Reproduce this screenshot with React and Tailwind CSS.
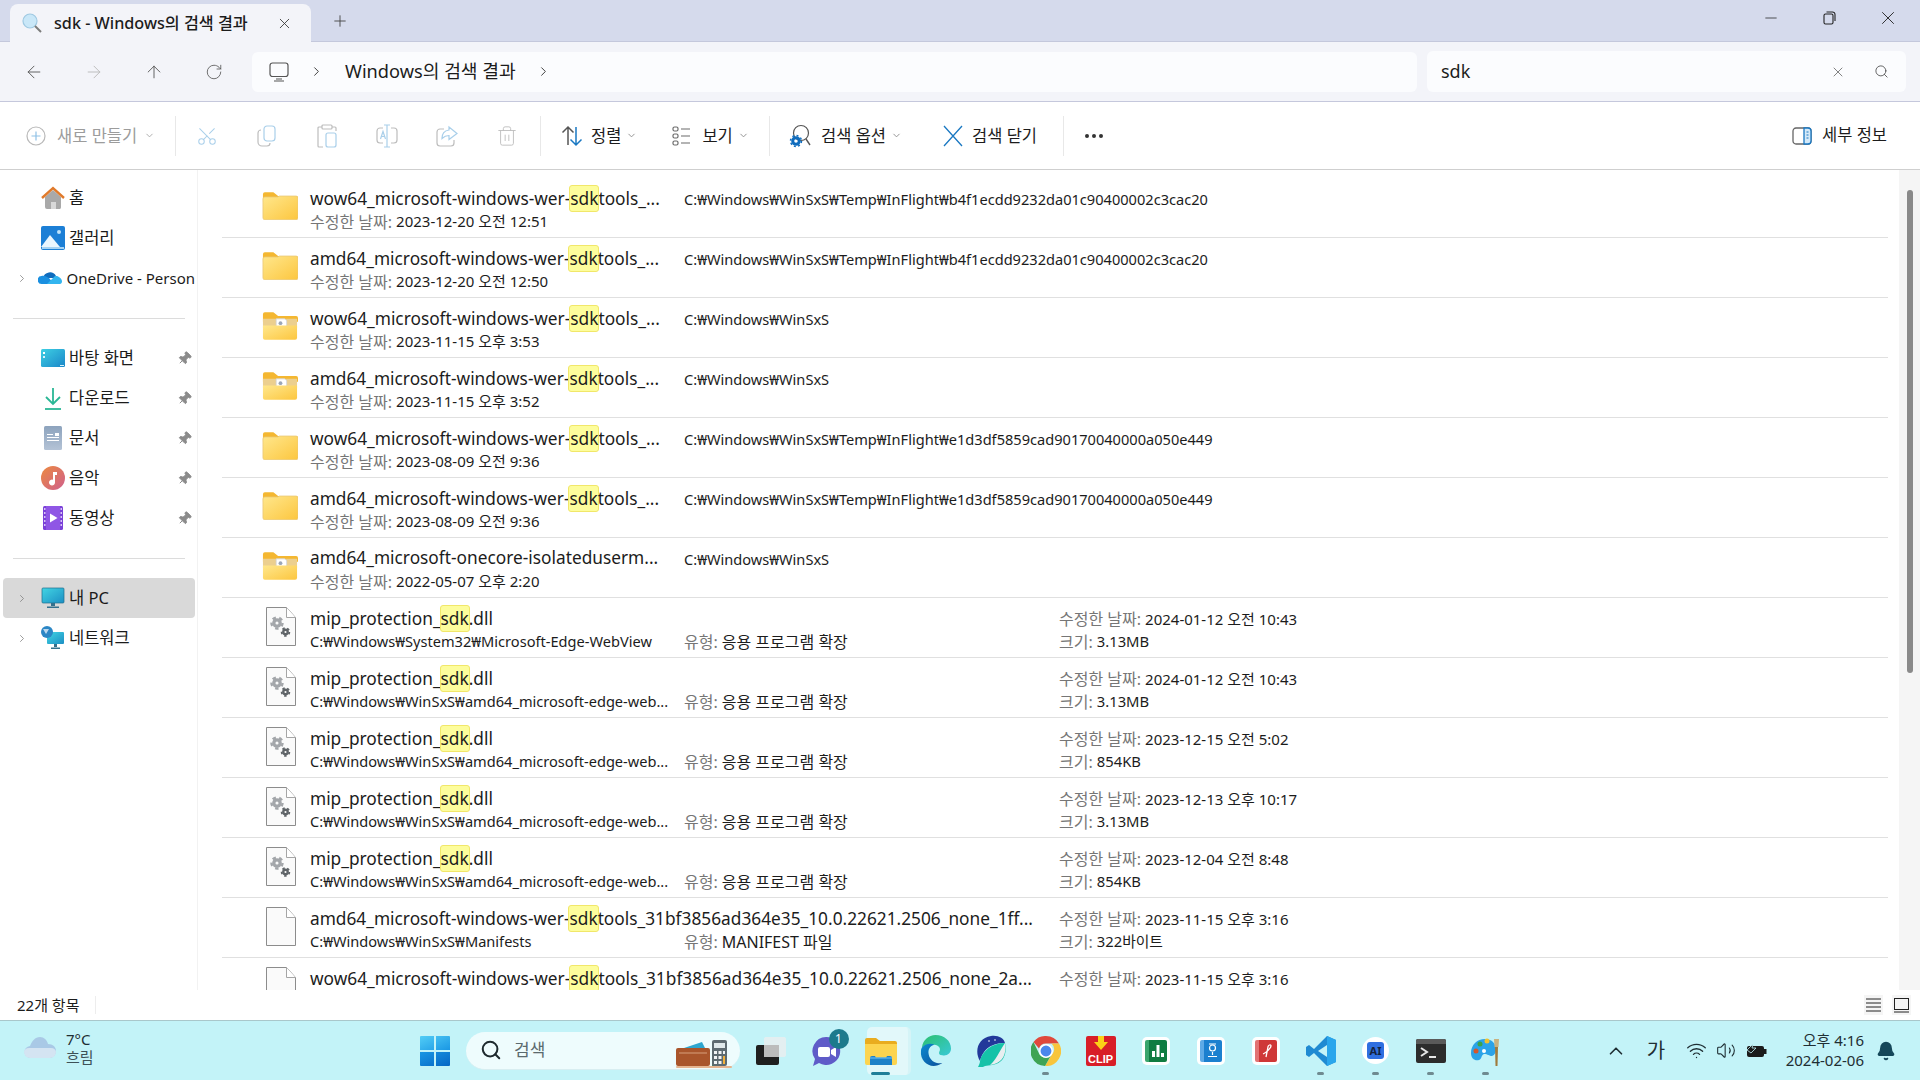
import React from "react";
import {
  ArrowLeft, ArrowRight, ArrowUp, RotateCw, ChevronRight, ChevronDown, ChevronUp, X, Plus, Search,
  Scissors, Trash2, Minus, MoreHorizontal, Pin, Bell, Wifi, Volume2,
} from "lucide-react";

const LONG1 = "C:₩Windows₩WinSxS₩Temp₩InFlight₩b4f1ecdd9232da01c90400002c3cac20";
const LONG2 = "C:₩Windows₩WinSxS₩Temp₩InFlight₩e1d3df5859cad90170040000a050e449";
const SXS = "C:₩Windows₩WinSxS";
const EDGE = "C:₩Windows₩WinSxS₩amd64_microsoft-edge-web...";

const folders = [
  { pre: "wow64_microsoft-windows-wer-", post: "tools_...", path: LONG1, date: "2023-12-20 오전 12:51" },
  { pre: "amd64_microsoft-windows-wer-", post: "tools_...", path: LONG1, date: "2023-12-20 오전 12:50" },
  { pre: "wow64_microsoft-windows-wer-", post: "tools_...", path: SXS, date: "2023-11-15 오후 3:53", doc: true },
  { pre: "amd64_microsoft-windows-wer-", post: "tools_...", path: SXS, date: "2023-11-15 오후 3:52", doc: true },
  { pre: "wow64_microsoft-windows-wer-", post: "tools_...", path: LONG2, date: "2023-08-09 오전 9:36" },
  { pre: "amd64_microsoft-windows-wer-", post: "tools_...", path: LONG2, date: "2023-08-09 오전 9:36" },
  { plain: "amd64_microsoft-onecore-isolateduserm...", path: SXS, date: "2022-05-07 오후 2:20", doc: true },
];

const files = [
  { pre: "mip_protection_", post: ".dll", path: "C:₩Windows₩System32₩Microsoft-Edge-WebView", type: "응용 프로그램 확장", date: "2024-01-12 오전 10:43", size: "3.13MB", dll: true },
  { pre: "mip_protection_", post: ".dll", path: EDGE, type: "응용 프로그램 확장", date: "2024-01-12 오전 10:43", size: "3.13MB", dll: true },
  { pre: "mip_protection_", post: ".dll", path: EDGE, type: "응용 프로그램 확장", date: "2023-12-15 오전 5:02", size: "854KB", dll: true },
  { pre: "mip_protection_", post: ".dll", path: EDGE, type: "응용 프로그램 확장", date: "2023-12-13 오후 10:17", size: "3.13MB", dll: true },
  { pre: "mip_protection_", post: ".dll", path: EDGE, type: "응용 프로그램 확장", date: "2023-12-04 오전 8:48", size: "854KB", dll: true },
  { pre: "amd64_microsoft-windows-wer-", post: "tools_31bf3856ad364e35_10.0.22621.2506_none_1ff...", path: "C:₩Windows₩WinSxS₩Manifests", type: "MANIFEST 파일", date: "2023-11-15 오후 3:16", size: "322바이트" },
  { pre: "wow64_microsoft-windows-wer-", post: "tools_31bf3856ad364e35_10.0.22621.2506_none_2a...", path: "", type: "", date: "2023-11-15 오후 3:16", size: "" },
];

// explorer icons
const FolderIcon = ({ doc }) => (
  <svg width="36" height="29" viewBox="0 0 38 30">
    <defs>
      <linearGradient id="fold" x1="0" y1="0" x2="1" y2="1">
        <stop offset="0" stopColor="#ffe78c" />
        <stop offset="1" stopColor="#fcc63f" />
      </linearGradient>
    </defs>
    <path d="M1 3a2 2 0 0 1 2-2h9l5 4h19a2 2 0 0 1 2 2v4H1z" fill="#f4b731" />
    {doc && <path d="M1 8h36v10H1z" fill="#eccf8e" />}
    {doc && <path d="M15 8h9l2 2v9H15z" fill="#fff" stroke="#cfd4dc" strokeWidth="0.8" />}
    {doc && <circle cx="19.5" cy="12.5" r="2" fill="#9ba7b8" />}
    {doc ? (
      <path d="M1 15h36v13a2 2 0 0 1-2 2H3a2 2 0 0 1-2-2z" fill="url(#fold)" />
    ) : (
      <path d="M1 8a2 2 0 0 1 2-2h14l1-1h18a2 2 0 0 1 2 2v21a2 2 0 0 1-2 2H3a2 2 0 0 1-2-2z" fill="url(#fold)" stroke="#e8c877" strokeWidth="0.8" />
    )}
  </svg>
);

const Gear = ({ cx, cy, r, fill }) => (
  <g>
    <circle cx={cx} cy={cy} r={r} fill={fill} />
    <circle cx={cx} cy={cy} r={r * 1.15} fill="none" stroke={fill} strokeWidth={r * 0.5} strokeDasharray={`${r * 0.72} ${r * 0.72}`} />
    <circle cx={cx} cy={cy} r={r * 0.32} fill="#fafafa" />
  </g>
);

const FileIcon = ({ dll }) => (
  <svg width="30" height="39" viewBox="0 0 30 39">
    <path d="M.5.5h20l9 10v28H.5z" fill="#fafafa" stroke="#8c8c8c" />
    <path d="M20.5.5v10h9" fill="#fff" stroke="#a5a5a5" />
    {dll && <Gear cx="11" cy="16" r="4.800" fill="#a3a6aa" />}
    {dll && <Gear cx="19.5" cy="25" r="3.400" fill="#5f6468" />}
  </svg>
);

const HomeIcon = () => (
  <svg width="24" height="24" viewBox="0 0 24 24">
    <path d="M4 11 12 4l8 7v10a2 2 0 0 1-1 2H6a2 2 0 0 1-2-2z" fill="#a9a9a9" />
    <path d="M10 23v-7h5v7z" fill="#d9d9d9" />
    <path d="M1 12 12 2l11 10" fill="none" stroke="#e07a2b" strokeWidth="2.4" />
  </svg>
);
const GalleryIcon = () => (
  <svg width="24" height="24" viewBox="0 0 24 24">
    <rect x="0" y="0" width="24" height="24" rx="2" fill="#1c7fd6" />
    <circle cx="18" cy="6" r="2" fill="#bfe3fb" />
    <path d="M0 21 9 9l10 12z" fill="#eaf6fe" />
    <rect x="1" y="21" width="22" height="2" fill="#a7d3f2" />
  </svg>
);
const OneDriveIcon = () => (
  <svg width="24" height="24" viewBox="0 0 24 24">
    <path d="M5 12a7 7 0 0 1 13-2 5 5 0 0 1 3 2z" fill="#0f6cbd" />
    <path d="M4 18a4 4 0 0 1-.5-8C6 9 9 11 11 12l5 6z" fill="#1a8fe0" />
    <path d="M9 18l8-8c3 0 7 2 7 5.500 0 2-1.500 2.500-3 2.500z" fill="#33b5ef" />
  </svg>
);
const DesktopIcon = () => (
  <svg width="24" height="24" viewBox="0 0 24 24">
    <defs>
      <linearGradient id="desk" x1="0" y1="0" x2="1" y2="1">
        <stop offset="0" stopColor="#3ed0e4" />
        <stop offset="1" stopColor="#1a86c8" />
      </linearGradient>
    </defs>
    <rect y="3" width="24" height="18" rx="1.500" fill="url(#desk)" />
    <rect x="2" y="6" width="2" height="2" fill="#fff" />
    <rect x="2" y="10" width="2" height="2" fill="#d8f4fb" />
    <rect x="19" y="19" width="4" height="1" fill="#d8f4fb" />
  </svg>
);
const DownloadIcon = () => (
  <svg width="24" height="24" viewBox="0 0 24 24" fill="none" stroke="#2ab795" strokeWidth="1.800">
    <path d="M12 2v15M5 11l7 7 7-7" />
    <path d="M4 23h16" />
  </svg>
);
const DocsIcon = () => (
  <svg width="24" height="24" viewBox="0 0 24 24">
    <defs>
      <linearGradient id="docs" x1="0" y1="0" x2="0" y2="1">
        <stop offset="0" stopColor="#8da3bd" />
        <stop offset="1" stopColor="#b4c3d6" />
      </linearGradient>
    </defs>
    <rect x="3" y="0" width="18" height="24" rx="1.500" fill="url(#docs)" />
    <path d="M6 8h6v1H6zM6 11h12v1H6zM6 14h12v1H6zM14 7h4v3h-4z" fill="#fff" />
  </svg>
);
const MusicIcon = () => (
  <svg width="24" height="24" viewBox="0 0 24 24">
    <defs>
      <linearGradient id="mus" x1="0" y1="0" x2="1" y2="1">
        <stop offset="0" stopColor="#ec8a3f" />
        <stop offset="1" stopColor="#cf5f8d" />
      </linearGradient>
    </defs>
    <circle cx="12" cy="12" r="12" fill="url(#mus)" />
    <path d="M12 6h4v3h-2v7.500a3 3 0 1 1-2-2.800z" fill="#fff" />
  </svg>
);
const VideoIcon = () => (
  <svg width="24" height="24" viewBox="0 0 24 24">
    <rect x="2" y="0" width="20" height="24" rx="1.500" fill="#7a40d8" />
    <path d="M5 0h14v24H5z" fill="#8f56e5" />
    <path d="M9 7.500 16.500 12 9 16.500z" fill="#fff" />
    <path d="M3 2h1.500v2H3zM3 6h1.500v2H3zM3 10h1.500v2H3zM3 14h1.500v2H3zM3 18h1.500v2H3zM19.500 2H21v2h-1.500zM19.500 6H21v2h-1.500zM19.500 10H21v2h-1.500zM19.500 14H21v2h-1.500zM19.500 18H21v2h-1.500z" fill="#d8c3f8" />
  </svg>
);
const PcIcon = () => (
  <svg width="24" height="24" viewBox="0 0 24 24">
    <defs>
      <linearGradient id="pc" x1="0" y1="0" x2="1" y2="1">
        <stop offset="0" stopColor="#42d5e3" />
        <stop offset="1" stopColor="#1c8fc4" />
      </linearGradient>
    </defs>
    <rect x="1" y="2" width="22" height="15" rx="1" fill="url(#pc)" stroke="#1e6f8c" strokeWidth="0.700" />
    <path d="M10 17h4v3h-4zM6 20.500h12V22H6z" fill="#35708c" />
  </svg>
);
const NetworkIcon = () => (
  <svg width="24" height="24" viewBox="0 0 24 24">
    <defs>
      <linearGradient id="net" x1="0" y1="0" x2="1" y2="1">
        <stop offset="0" stopColor="#42d5e3" />
        <stop offset="1" stopColor="#1c8fc4" />
      </linearGradient>
    </defs>
    <rect x="6" y="6" width="17" height="12" rx="1" fill="url(#net)" />
    <path d="M13 18h3v3h-3zM10 21.500h9V23h-9z" fill="#35708c" />
    <circle cx="6" cy="6" r="6" fill="#2b86c5" />
    <path d="M2 3h6L5 8z" fill="#bcd8ef" />
  </svg>
);

const NavPin = () => <Pin size={15} className="rotate-45 text-[#8b8b8b] fill-[#8b8b8b]" strokeWidth={1.500} />;

const NavItem = ({ icon, label, arrow, pinned, active, labelClass = "text-[16.500px]" }) => (
  <div className={`flex items-center h-[40px] mx-[3px] pl-[13px] rounded-[4px] w-[192px] ${active ? "bg-[#d9d9d9]" : ""}`}>
    <div className="w-[12px] flex items-center justify-center text-[#7c7c7c]">
      {arrow && <ChevronRight size={15} strokeWidth={1.500} />}
    </div>
    <div className="w-[38px] flex justify-end pr-[1px]">{icon}</div>
    <div className={`ml-[3px] text-[#1b1b1b] whitespace-nowrap flex-1 ${labelClass}`}>{label}</div>
    {pinned && <div className="w-[27px] flex justify-end pr-[3px]"><NavPin /></div>}
  </div>
);

const Sep = () => (
  <div className="h-[40px] flex items-center pl-[13px] pr-[12px]">
    <div className="h-[1px] w-full bg-[#dcdcdc]" />
  </div>
);

const Sidebar = () => (
  <div className="w-[198px] shrink-0 border-r border-[#f2f2f2] pt-[8px] overflow-hidden">
    <NavItem icon={<HomeIcon />} label="홈" />
    <NavItem icon={<GalleryIcon />} label="갤러리" />
    <NavItem icon={<OneDriveIcon />} label="OneDrive - Person" arrow labelClass="text-[15px] pl-[1px]" />
    <Sep />
    <NavItem icon={<DesktopIcon />} label="바탕 화면" pinned />
    <NavItem icon={<DownloadIcon />} label="다운로드" pinned />
    <NavItem icon={<DocsIcon />} label="문서" pinned />
    <NavItem icon={<MusicIcon />} label="음악" pinned />
    <NavItem icon={<VideoIcon />} label="동영상" pinned />
    <Sep />
    <NavItem icon={<PcIcon />} label="내 PC" arrow active />
    <NavItem icon={<NetworkIcon />} label="네트워크" arrow />
  </div>
);

const Mark = ({ children }) => (
  <span className="inline-block h-[27px] leading-[25px] bg-[#fdfd9c] border border-[#f1e76a] rounded-[3px] -mx-[1px]">{children}</span>
);

const Name = ({ row }) => (
  <div className="h-[24px] mb-[2px] flex items-center text-[17.300px] text-[#1c1c1c] whitespace-nowrap">
    {row.plain ? row.plain : (
      <span>{row.pre}<Mark>sdk</Mark>{row.post}</span>
    )}
  </div>
);

const Meta = ({ label, value, valueClass = "text-[15px]" }) => (
  <div className="h-[19px] flex items-center whitespace-nowrap">
    <span className="text-[16px] text-[#767676]">{label}:</span>
    <span className={`ml-[4px] text-[#1c1c1c] ${valueClass}`}>{value}</span>
  </div>
);

const FolderRow = ({ row }) => (
  <div className="flex h-[60px] border-b border-[#e0e0e0] shrink-0">
    <div className="w-[88px] flex items-center pl-[40px] pb-[4px]"><FolderIcon doc={row.doc} /></div>
    <div className="w-[374px] pt-[8px]">
      <Name row={row} />
      <Meta label="수정한 날짜" value={row.date} />
    </div>
    <div className="pt-[10px]">
      <div className="h-[24px] flex items-center text-[14.600px] text-[#1c1c1c] whitespace-nowrap">{row.path}</div>
    </div>
  </div>
);

const FileRow = ({ row }) => (
  <div className="flex h-[60px] border-b border-[#e0e0e0] shrink-0">
    <div className="w-[88px] flex items-center pl-[44px] pb-[2px]"><FileIcon dll={row.dll} /></div>
    <div className="w-[374px] pt-[8px]">
      <Name row={row} />
      <div className="h-[19px] flex items-center text-[14.600px] text-[#1c1c1c] whitespace-nowrap">{row.path}</div>
    </div>
    <div className="w-[375px] pt-[10px]">
      <div className="h-[24px]" />
      {row.type && <Meta label="유형" value={row.type} valueClass="text-[16px]" />}
    </div>
    <div className="pt-[9px]">
      <div className="h-[24px] mb-[1px] flex items-center"><Meta label="수정한 날짜" value={row.date} /></div>
      {row.size && <Meta label="크기" value={row.size} valueClass="text-[14.800px]" />}
    </div>
  </div>
);

const ToolDivider = () => <div className="w-[1px] h-[40px] bg-[#e8e8e8]" />;

const Slot = ({ w, className = "", children }) => (
  <div className={`flex items-center justify-center shrink-0 ${className}`} style={{ width: w }}>{children}</div>
);

const Toolbar = () => (
  <div className="h-[68px] shrink-0 bg-white border-b border-[#cfcfcf] flex items-center text-[16.500px] text-[#1c1c1c]">
    <div className="flex items-center pl-[26px] w-[175px] text-[#9c9c9c]">
      <svg width="20" height="20" viewBox="0 0 20 20" fill="none" stroke="#b9b9b9" strokeWidth="1.200">
        <circle cx="10" cy="10" r="9" />
        <path d="M10 5.500v9M5.500 10h9" stroke="#8fc1e6" />
      </svg>
      <span className="ml-[11px] mt-[2px]">새로 만들기</span>
      <ChevronDown size={11} className="ml-[7px] text-[#a8a8a8]" />
    </div>
    <ToolDivider />
    <div className="flex items-center pl-[1px] text-[#b4b4b4]">
      <Slot w={60}><Scissors size={22} strokeWidth={1.100} className="-rotate-90 text-[#a9cfea]" /></Slot>
      <Slot w={60}>
        <svg width="20" height="22" viewBox="0 0 20 22" fill="none" strokeWidth="1.200">
          <rect x="7" y="1" width="11" height="15" rx="3" stroke="#a9cfea" />
          <path d="M4 5a3 3 0 0 0-3 3v9a4 4 0 0 0 4 4h5a3 3 0 0 0 3-3" stroke="#bdbdbd" />
        </svg>
      </Slot>
      <Slot w={60}>
        <svg width="20" height="24" viewBox="0 0 20 24" fill="none" strokeWidth="1.200">
          <path d="M5 3H2a1 1 0 0 0-1 1v18a1 1 0 0 0 1 1h4M15 3h3a1 1 0 0 1 1 1v3" stroke="#bdbdbd" />
          <rect x="5" y="1" width="10" height="4" rx="1" stroke="#bdbdbd" />
          <rect x="9" y="9" width="10" height="14" rx="2" stroke="#a9cfea" />
        </svg>
      </Slot>
      <Slot w={60}>
        <svg width="22" height="24" viewBox="0 0 22 24" fill="none" strokeWidth="1.200">
          <path d="M7 4H4a3 3 0 0 0-3 3v9a3 3 0 0 0 3 3h3M15 4h3a3 3 0 0 1 3 3v9a3 3 0 0 1-3 3h-3" stroke="#bdbdbd" />
          <path d="M8 1h6M8 23h6M11 1v22" stroke="#a9cfea" />
          <path d="M4.500 15 7 7.500 9.500 15M5.500 12.500h3" stroke="#a9cfea" />
        </svg>
      </Slot>
      <Slot w={60}>
        <svg width="22" height="22" viewBox="0 0 22 22" fill="none" strokeWidth="1.200">
          <path d="M8 4H4a3 3 0 0 0-3 3v11a3 3 0 0 0 3 3h11a3 3 0 0 0 3-3v-3" stroke="#bdbdbd" />
          <path d="M13 2l8 6.500-8 6v-4c-3 0-5 1-7 3 0-5 3-8 7-8.500z" stroke="#a9cfea" />
        </svg>
      </Slot>
      <Slot w={60}><Trash2 size={22} strokeWidth={1} className="text-[#bdbdbd]" /></Slot>
    </div>
    <div className="ml-[3px]"><ToolDivider /></div>
    <div className="flex items-center ml-[20px] w-[208px]">
      <svg width="22" height="22" viewBox="0 0 22 22" fill="none" strokeWidth="1.500">
        <path d="M7 20V2M1.500 7.500 7 2l5.500 5.500" stroke="#555" />
        <path d="M15 2v18M9.500 14.500 15 20l5.500-5.500" stroke="#1a78c2" />
      </svg>
      <span className="ml-[8px] mt-[2px]">정렬</span>
      <ChevronDown size={11} className="ml-[5px] text-[#8c8c8c]" />
      <svg className="ml-[35px]" width="20" height="20" viewBox="0 0 20 20" fill="none" stroke="#6a6a6a" strokeWidth="1.200">
        <rect x="1" y="1" width="5" height="4" rx="1.500" />
        <rect x="1" y="8" width="5" height="4" rx="1.500" />
        <rect x="1" y="15" width="5" height="4" rx="1.500" />
        <path d="M9 3h9M9 10h9M9 17h9" />
      </svg>
      <span className="ml-[10px] mt-[2px]">보기</span>
      <ChevronDown size={11} className="ml-[5px] text-[#8c8c8c]" />
    </div>
    <ToolDivider />
    <div className="flex items-center ml-[19px] w-[274px]">
      <svg width="22" height="24" viewBox="0 0 22 24" fill="none">
        <circle cx="12" cy="9" r="7.500" stroke="#555" strokeWidth="1.200" />
        <path d="M17 15l4 6" stroke="#555" strokeWidth="1.400" />
        <circle cx="7" cy="17" r="3.300" stroke="#0f6cbd" strokeWidth="3" />
        <circle cx="7" cy="17" r="5.500" stroke="#0f6cbd" strokeWidth="1.500" strokeDasharray="2 2.300" />
      </svg>
      <span className="ml-[10px] mt-[2px]">검색 옵션</span>
      <ChevronDown size={11} className="ml-[5px] text-[#8c8c8c]" />
      <svg className="ml-[40px]" width="22" height="22" viewBox="0 0 22 22" fill="none" stroke="#1a78c2" strokeWidth="1.300">
        <path d="M2 1l18 20M20 1 2 21" />
      </svg>
      <span className="ml-[8px] mt-[2px]">검색 닫기</span>
    </div>
    <ToolDivider />
    <MoreHorizontal size={24} className="ml-[18px] text-[#333]" />
    <div className="ml-auto flex items-center pr-[33px]">
      <svg width="20" height="18" viewBox="0 0 20 18" fill="none">
        <rect x="1" y="1" width="18" height="16" rx="3" stroke="#666" strokeWidth="1.300" />
        <path d="M12 1h4a3 3 0 0 1 3 3v10a3 3 0 0 1-3 3h-4z" fill="#d4e9f8" stroke="#1a78c2" strokeWidth="1.300" />
        <path d="M14.500 5h2M14.500 8h2M14.500 11h2" stroke="#1a78c2" />
      </svg>
      <span className="ml-[10px]">세부 정보</span>
    </div>
  </div>
);

const Indicator = ({ active }) => (
  <div className={active ? "w-[19px] h-[3px] rounded-full bg-[#1f7f99]" : "w-[7px] h-[3px] rounded-full bg-[#6f8a90]"} />
);

const TaskIcon = ({ running, active, children }) => (
  <div className="w-[55px] h-[60px] shrink-0 relative flex items-center justify-center">
    {active && <div className="absolute top-[6px] left-[14px] w-[44px] h-[48px] rounded-[5px] bg-[#e2f8fa] border-r-[3px] border-[#d5f4f7]" />}
    <div className="relative">{children}</div>
    {running && <div className="absolute bottom-[6px] left-0 right-0 flex justify-center"><Indicator active={active} /></div>}
  </div>
);

const AppTile = ({ color, children }) => (
  <div className="w-[28px] h-[28px] rounded-[5px] bg-white flex items-center justify-center">
    <div className={`w-[22px] h-[22px] rounded-[2px] flex items-center justify-center ${color}`}>{children}</div>
  </div>
);

const TaskIcons = () => (
  <div className="flex items-center ml-[3px]">
    <TaskIcon>
      <svg width="30" height="30" viewBox="0 0 30 30">
        <rect x="0" y="9" width="23" height="20" rx="2" fill="#1f1f1f" />
        <rect x="8" y="1" width="22" height="20" rx="2" fill="#e7eef0" opacity="0.9" />
        <rect x="8" y="9" width="15" height="12" fill="#bcbcbc" />
      </svg>
    </TaskIcon>
    <TaskIcon>
      <div className="relative">
        <svg width="30" height="34" viewBox="0 0 30 34">
          <path d="M15 3a14 14 0 1 1-7 26l-6 3 2-7A14 14 0 0 1 15 3z" fill="#5f5bc8" />
          <rect x="7" y="13" width="12" height="10" rx="2" fill="#fff" />
          <path d="M20 16l5-3v10l-5-3z" fill="#fff" />
        </svg>
        <div className="absolute -top-[5px] -right-[8px] w-[20px] h-[20px] rounded-full bg-[#1d7a8c] text-white text-[12px] flex items-center justify-center">1</div>
      </div>
    </TaskIcon>
    <TaskIcon active running>
      <svg width="32" height="28" viewBox="0 0 32 28">
        <path d="M0 3a2 2 0 0 1 2-2h9l4 3h15a2 2 0 0 1 2 2v4H0z" fill="#e9ac1f" />
        <path d="M0 7h32v19a2 2 0 0 1-2 2H2a2 2 0 0 1-2-2z" fill="#fcd44f" />
        <path d="M5 28V21a2 2 0 0 1 2-2h3l1 2h10l1-2h3a2 2 0 0 1 2 2v7z" fill="#1e81c8" />
        <path d="M5 21h22" stroke="#53aee8" strokeWidth="1.500" />
      </svg>
    </TaskIcon>
    <TaskIcon>
      <svg width="31" height="31" viewBox="0 0 32 32">
        <defs>
          <linearGradient id="edgeA" x1="0" y1="0" x2="1" y2="1">
            <stop offset="0" stopColor="#2dc06e" />
            <stop offset="1" stopColor="#37c9d6" />
          </linearGradient>
          <linearGradient id="edgeB" x1="0" y1="0" x2="1" y2="1">
            <stop offset="0" stopColor="#0c8bd1" />
            <stop offset="1" stopColor="#0b4f9a" />
          </linearGradient>
        </defs>
        <path d="M2 13C3 5 9 0 16 0c9 0 16 6 16 14 0 5-4 8-9 7-3 0-4-2-3-4 2-3-1-7-5-7-5 0-10 0-13 3z" fill="url(#edgeA)" />
        <path d="M2 13c3-4 9-5 13-3-5 1-7 5-6 10 1 6 7 10 14 9-3 2-6 3-9 3C7 32 0 25 1 17c0-2 .5-3 1-4z" fill="url(#edgeB)" />
      </svg>
    </TaskIcon>
    <TaskIcon>
      <svg width="30" height="32" viewBox="0 0 30 32">
        <path d="M4 26C-2 16 2 3 15 1c7-1 13 2 14 7-8 0-21 2-25 18z" fill="#22399a" />
        <path d="M4 26c2-10 12-18 25-18 2 8 0 18-9 21-5 2-11 1-13 3-2 0-3 0-5 0 1-2 2-4 2-6z" fill="#15c2a8" />
        <path d="M14 30c6-5 9-13 15-22 2 10-2 21-15 22z" fill="#e8eef0" />
        <circle cx="13" cy="6" r="0.800" fill="#fff" />
        <circle cx="19" cy="5" r="0.800" fill="#fff" />
      </svg>
    </TaskIcon>
    <TaskIcon running>
      <svg width="30" height="30" viewBox="0 0 30 30">
        <path d="M15 0a15 15 0 0 1 13 7.500H15a7.500 7.500 0 0 0-7 5L2.500 6A15 15 0 0 1 15 0z" fill="#e0493c" />
        <path d="M28 7.500A15 15 0 0 1 14 30l6.500-11a7.500 7.500 0 0 0 0-11.500z" fill="#f8c53c" />
        <path d="M2.500 6 8.500 18.500a7.500 7.500 0 0 0 12 0L14 30A15 15 0 0 1 2.500 6z" fill="#3ea455" />
        <circle cx="15" cy="15" r="6.200" fill="#4a87ec" />
        <circle cx="15" cy="15" r="6.200" fill="none" stroke="#fff" strokeWidth="1.500" />
      </svg>
    </TaskIcon>
    <TaskIcon>
      <div className="w-[30px] h-[30px] rounded-[2px] bg-[#d81e28] flex flex-col items-center justify-end relative font-['Liberation_Sans',sans-serif]">
        <svg className="absolute top-0 left-[8px]" width="14" height="14" viewBox="0 0 14 14"><path d="M4 0h6v6h4l-7 8-7-8h4z" fill="#fcd116" /></svg>
        <span className="text-white text-[11px] font-bold leading-[14px]">CLIP</span>
      </div>
    </TaskIcon>
    <TaskIcon>
      <AppTile color="bg-[#107c41] border-l-[4px] border-[#3aa56d]">
        <svg width="13" height="13" viewBox="0 0 13 13" fill="#fff"><path d="M1 7h3v6H1zM5.500 1h3v12h-3zM10 9h3v4h-3z" /></svg>
      </AppTile>
    </TaskIcon>
    <TaskIcon>
      <AppTile color="bg-[#1b80cf] border-l-[4px] border-[#5eaae6]">
        <svg width="15" height="15" viewBox="0 0 15 15" fill="none" stroke="#fff" strokeWidth="1.200"><circle cx="7.500" cy="5" r="3" /><path d="M4 1h7M7.500 9v3M3 13.500h9" /></svg>
      </AppTile>
    </TaskIcon>
    <TaskIcon>
      <AppTile color="bg-[#cf3737] border-l-[4px] border-[#e27373]">
        <svg width="15" height="15" viewBox="0 0 15 15" fill="none" stroke="#fff" strokeWidth="1.300"><path d="M3 11c3-1 8-6 8-8s-3-1-3 1l-2 10" /></svg>
      </AppTile>
    </TaskIcon>
    <TaskIcon running>
      <svg width="30" height="30" viewBox="0 0 30 30">
        <path d="M21 0 8 13 3 9 0 11v8l3 2 5-4 13 13 9-4V4z" fill="#1f8ad2" />
        <path d="M21 0 30 4v22l-9 4z" fill="#2aa6ec" />
        <path d="M21 9 12 15l9 6z" fill="#c4f3f8" />
      </svg>
    </TaskIcon>
    <TaskIcon running>
      <div className="w-[27px] h-[27px] rounded-full bg-white flex items-center justify-center">
        <div className="w-[17px] h-[17px] rounded-[3px] bg-[#2f6fe0] flex items-center justify-center text-[#14233f] text-[11px] font-bold leading-none">AI</div>
      </div>
    </TaskIcon>
    <TaskIcon running>
      <svg width="30" height="24" viewBox="0 0 30 24">
        <rect width="30" height="24" rx="2" fill="#2c2c2c" />
        <path d="M0 2a2 2 0 0 1 2-2h26a2 2 0 0 1 2 2v3H0z" fill="#5a5a5a" />
        <path d="M5 9l6 4-6 4" fill="none" stroke="#e6e6e6" strokeWidth="2" />
        <path d="M13 18h7" stroke="#e6e6e6" strokeWidth="2" />
      </svg>
    </TaskIcon>
    <TaskIcon running>
      <svg width="30" height="30" viewBox="0 0 30 30">
        <path d="M14 3C6 3 0 9 0 17c0 6 4 8 8 7 3-1 2-5 5-6 4 0 5 2 8 2 3-1 4-4 4-7 0-6-5-10-11-10z" fill="#2ba3e8" />
        <circle cx="5" cy="15" r="2.500" fill="#d5562b" />
        <circle cx="9" cy="8" r="2.500" fill="#3ca34a" />
        <circle cx="16" cy="5" r="2.500" fill="#f2c12e" />
        <circle cx="13" cy="15" r="2" fill="#fff" />
        <path d="M24 10h3l-.5 20h-2z" fill="#a07a3b" />
        <path d="M23 3h5l-.5 8h-4z" fill="#c9b27f" />
      </svg>
    </TaskIcon>
  </div>
);

const Taskbar = () => (
  <div className="h-[60px] shrink-0 bg-[#c3f3f8] border-t border-[#a9c7cb] flex items-center">
    <div className="w-[420px] shrink-0 flex items-center pl-[24px]">
      <svg className="mb-[6px]" width="32" height="22" viewBox="0 0 32 22">
        <path d="M7 21a6 6 0 0 1-1-12C8 4 11 0 16 0c4 0 7 3 8 7 5 0 8 3 8 7s-3 7-7 7z" fill="#a9c9e6" />
        <path d="M0 15c0-2 2-4 5-4h22c3 0 5 2 5 4a6 6 0 0 1-6 6H6a6 6 0 0 1-6-6z" fill="#d4e4f2" />
      </svg>
      <div className="ml-[10px] mb-[5px] text-[15px] leading-[18px] text-[#1f2e33]">
        <div>7°C</div>
        <div className="text-[#3d5157]">흐림</div>
      </div>
    </div>
    <svg width="30" height="30" viewBox="0 0 30 30" className="shrink-0">
      <defs>
        <linearGradient id="winA" x1="0" y1="0" x2="1" y2="1"><stop offset="0" stopColor="#52cdf6" /><stop offset="1" stopColor="#1a97e4" /></linearGradient>
        <linearGradient id="winB" x1="0" y1="0" x2="1" y2="1"><stop offset="0" stopColor="#1a97e4" /><stop offset="1" stopColor="#0666c4" /></linearGradient>
      </defs>
      <path d="M0 1a1 1 0 0 1 1-1h13v14H0zM16 0h13a1 1 0 0 1 1 1v13H16z" fill="url(#winA)" />
      <path d="M0 16h14v14H1a1 1 0 0 1-1-1zM16 16h14v13a1 1 0 0 1-1 1H16z" fill="url(#winB)" />
    </svg>
    <div className="ml-[16px] w-[274px] h-[38px] shrink-0 rounded-full bg-[#eefcfd] border-b border-[#d8eef1] flex items-center pl-[14px] relative">
      <Search size={22} strokeWidth={2.200} className="text-[#1e2a2e]" />
      <span className="ml-[12px] text-[17px] text-[#5b6a6e]">검색</span>
      <svg className="absolute right-[8px] top-[8px]" width="56" height="28" viewBox="0 0 56 28">
        <rect x="0" y="8" width="34" height="18" rx="2" fill="#a9552b" />
        <path d="M8 8 26 2l3 6z" fill="#2da6cf" />
        <path d="M3 13h28" stroke="#d7a07c" />
        <rect x="36" y="8" width="4" height="18" fill="#3f8a63" />
        <rect x="36" y="0" width="15" height="26" rx="2" fill="#5d6a70" />
        <rect x="38" y="3" width="11" height="5" fill="#dfe8ea" />
        <path d="M38 11h3v3h-3zM42.500 11h3v3h-3zM47 11h2v3h-2zM38 16h3v3h-3zM42.500 16h3v3h-3zM38 21h3v3h-3zM42.500 21h3v3h-3z" fill="#f1f4f5" />
        <path d="M47 16h2v8h-2z" fill="#f2b13c" />
        <rect x="0" y="26" width="56" height="2" rx="1" fill="#e5b48f" />
      </svg>
    </div>
    <TaskIcons />
    <div className="flex items-center ml-[83px] text-[#1f2e33]">
      <Slot w={40}><ChevronUp size={22} strokeWidth={1.800} /></Slot>
      <Slot w={40}><span className="text-[20px]">가</span></Slot>
      <Slot w={40}><Wifi size={21} strokeWidth={1.500} /></Slot>
      <Slot w={20}><Volume2 size={21} strokeWidth={1.300} /></Slot>
      <Slot w={40}>
        <svg width="21" height="14" viewBox="0 0 21 14">
          <rect x="1" y="2" width="17" height="11" rx="2" fill="#1b1b1b" />
          <rect x="18" y="5" width="2.500" height="5" fill="#1b1b1b" />
          <path d="M1 6 7 0l-1 4h4L5 9z" fill="#1b1b1b" stroke="#c3f3f8" strokeWidth="0.800" />
        </svg>
      </Slot>
    </div>
    <div className="w-[88px] mb-[2px] text-right text-[15px] leading-[20px] text-[#1f2e33]">
      <div>오후 4:16</div>
      <div>2024-02-06</div>
    </div>
    <Bell size={20} className="ml-[12px] text-[#15475a] fill-[#15475a]" />
  </div>
);

export default function App() {
  return (
    <div className="w-[1920px] h-[1080px] flex flex-col overflow-hidden bg-white font-['Noto_Sans','Noto_Sans_CJK_KR',sans-serif]">
      {/* TITLE BAR */}
      <div className="h-[42px] shrink-0 bg-[#d5daec] border-b border-[#c4c8dc] flex items-end">
        <div className="ml-[10px] w-[301px] h-[38px] bg-[#f3f4f9] rounded-t-[8px] flex items-center pl-[11px] translate-y-[1px]">
          <svg width="22" height="22" viewBox="0 0 22 22" fill="none">
            <circle cx="9" cy="9" r="7" fill="#c9e7f8" stroke="#9fc9e2" strokeWidth="1.200" />
            <path d="M14 14l6 6" stroke="#7c7c7c" strokeWidth="2" />
          </svg>
          <span className="ml-[11px] text-[16.200px] font-medium text-[#1c1c1c] whitespace-nowrap">sdk - Windows의 검색 결과</span>
          <X size={17} strokeWidth={1.200} className="ml-auto mr-[18px] text-[#333]" />
        </div>
        <Plus size={18} strokeWidth={1.200} className="ml-[20px] mb-[11px] text-[#444]" />
        <div className="ml-auto flex items-center self-start h-[36px] pr-[2px] text-[#222]">
          <Slot w={58}><Minus size={18} strokeWidth={1} /></Slot>
          <Slot w={58}>
            <svg width="13" height="14" viewBox="0 0 13 14" fill="none" stroke="#222" strokeWidth="1.100">
              <rect x="1" y="3" width="9" height="10" rx="1.500" />
              <path d="M3.500 1h6A2.500 2.500 0 0 1 12 3.500V10" />
            </svg>
          </Slot>
          <Slot w={60}><X size={22} strokeWidth={1} /></Slot>
        </div>
      </div>

      {/* ADDRESS ROW */}
      <div className="h-[60px] shrink-0 bg-[#f3f4f9] border-b border-[#c5c8dc] flex items-center">
        <div className="flex items-center w-[252px] pl-[4px] text-[#555]">
          <Slot w={60}><ArrowLeft size={20} strokeWidth={1.100} /></Slot>
          <Slot w={60}><ArrowRight size={20} strokeWidth={1.100} className="text-[#b9b9b9]" /></Slot>
          <Slot w={59}><ArrowUp size={20} strokeWidth={1.100} /></Slot>
          <Slot w={61}><RotateCw size={18} strokeWidth={1.100} /></Slot>
        </div>
        <div className="w-[1165px] h-[40px] bg-[#fbfcfe] rounded-[6px] flex items-center pl-[17px] text-[18px] text-[#1c1c1c]">
          <svg width="20" height="20" viewBox="0 0 20 20" fill="none" stroke="#555" strokeWidth="1.200">
            <rect x="1" y="1" width="18" height="13.500" rx="2.500" />
            <path d="M7 17h6M5 19h10" />
          </svg>
          <ChevronRight size={15} strokeWidth={1.500} className="ml-[20px] text-[#333]" />
          <span className="ml-[21px] text-[18.200px]">Windows의 검색 결과</span>
          <ChevronRight size={15} strokeWidth={1.500} className="ml-[20px] text-[#333]" />
        </div>
        <div className="ml-[10px] w-[479px] h-[41px] bg-[#fbfcfe] rounded-[6px] flex items-center pl-[14px] text-[18px] text-[#1c1c1c]">
          sdk
          <X size={16} strokeWidth={1.100} className="ml-auto text-[#555]" />
          <Search size={15} strokeWidth={1.300} className="ml-[28px] mr-[17px] text-[#444]" />
        </div>
      </div>

      <Toolbar />

      {/* BODY */}
      <div className="h-[820px] shrink-0 flex overflow-hidden">
        <Sidebar />
        <div className="flex-1 pl-[24px] pr-[11px] pt-[8px] overflow-hidden flex flex-col">
          {folders.map((row, i) => <FolderRow key={i} row={row} />)}
          {files.map((row, i) => <FileRow key={i} row={row} />)}
        </div>
        <div className="w-[21px] shrink-0 bg-[#f5f5f5] pt-[20px] flex justify-center">
          <div className="w-[6px] h-[483px] rounded-full bg-[#8a8a8a]" />
        </div>
      </div>

      {/* STATUS BAR */}
      <div className="h-[30px] shrink-0 flex items-center pl-[17px] text-[15px] text-[#1c1c1c]">
        <span>22개 항목</span>
        <div className="ml-[16px] w-[1px] h-[18px] bg-[#ededed]" />
        <div className="ml-auto flex items-center gap-[9px] pr-[9px]">
          <div className="w-[19px] h-[20px] bg-[#f5f5f5] flex items-center justify-center">
            <svg width="15" height="14" viewBox="0 0 15 14" stroke="#222" strokeWidth="1"><path d="M0 1h15M0 5h15M0 9h15M0 13h15" /></svg>
          </div>
          <div className="w-[19px] h-[20px] bg-[#f5f5f5] flex items-center justify-center">
            <svg width="15" height="15" viewBox="0 0 15 15" fill="none" stroke="#222" strokeWidth="1"><rect x=".5" y=".5" width="14" height="11" /><path d="M0 14h15" /></svg>
          </div>
        </div>
      </div>

      <Taskbar />
    </div>
  );
}
